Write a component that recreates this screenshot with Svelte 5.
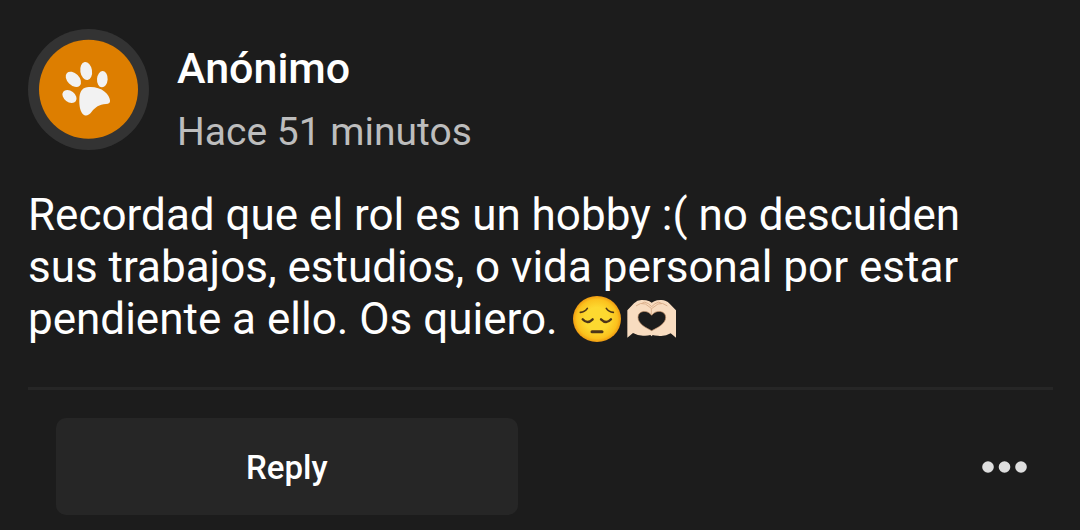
<script>
    const post = {
        author: "Anónimo",
        time: "Hace 51 minutos",
        text: "Recordad que el rol es un hobby :( no descuiden sus trabajos, estudios, o vida personal por estar pendiente a ello. Os quiero."
    };
</script>

<article class="post">
    <header>
        <svg class="avatar" viewBox="24 27 363 363" aria-hidden="true">
            <circle cx="205.5" cy="208.5" r="181.5" fill="#333333" />
            <circle cx="205.5" cy="208" r="148.5" fill="#dd7e00" />
            <g fill="#f2f2f2">
                <ellipse cx="198.500" cy="153" rx="17.500" ry="27.500" transform="rotate(-9 198.500 153)" />
                <ellipse cx="160" cy="178" rx="18" ry="27" transform="rotate(-45 160 178)" />
                <ellipse cx="148.500" cy="229.500" rx="16.500" ry="23.500" transform="rotate(-53 148.500 229.500)" />
                <ellipse cx="247" cy="177.500" rx="16" ry="24.500" transform="rotate(4 247 177.500)" />
                <path d="M201 202C218 199 240 203 254 215C264 223 269 232 270 241C271 249 267 252 258 252C237 253 226 262 215 275C207 285 200 289 192 285C181 279 177 257 178 238C179 217 184 205 201 202Z" />
            </g>
        </svg>
        <div class="info">
            <h2>{post.author}</h2>
            <time>{post.time}</time>
        </div>
    </header>

    <p class="text">
        {post.text}
        <span class="emojis">
            <svg viewBox="30 24 156 156" role="img" aria-label="😔">
                <defs>
                    <radialGradient id="face">
                        <stop offset="0.5" stop-color="#fdd930" />
                        <stop offset="0.85" stop-color="#fbc11d" />
                        <stop offset="1" stop-color="#ef9b12" />
                    </radialGradient>
                </defs>
                <ellipse cx="108" cy="102" rx="72" ry="69" fill="url(#face)" />
                <g fill="none" stroke="#4d3518" stroke-width="7" stroke-linecap="round">
                    <path d="M58 82Q72 81 79 70" stroke-width="5" />
                    <path d="M157 82Q143 81 136 70" stroke-width="5" />
                    <path d="M65 103Q79 119 95 103" />
                    <path d="M120 103Q136 119 150 103" />
                    <path d="M93 140H123" stroke-width="9" />
                </g>
            </svg>
            <svg viewBox="192 24 156 156" role="img" aria-label="🫶🏻">
                <path
                    fill="#f8dcc0"
                    fill-rule="evenodd"
                    d="M199 158V76L219 55Q230 44 243 45Q257 45 265 49L272 53L280 49Q289 44 302 45Q315 45 326 56L345 76V158L329 145Q312 155 291 152Q280 152 275 150L272 154L268 150Q259 153 246 152Q230 152 216 144ZM272 137C256 129 231 117 231 97C231 76 260 73 272 91C284 73 314 76 314 97C314 117 288 129 272 137Z"
                />
                <path
                    d="M272 137C256 129 231 117 231 97C231 76 260 73 272 91C284 73 314 76 314 97C314 117 288 129 272 137Z"
                    fill="none"
                    stroke="#b98a63"
                    stroke-width="2"
                />
                <g fill="none" stroke="#dbb08c" stroke-width="3" stroke-linecap="round">
                    <path d="M226 62Q239 51 253 57L271 70V88" />
                    <path d="M318 62Q305 51 291 57L273 70" />
                    <path d="M242 55Q251 47 262 56L272 65L282 56Q293 47 302 55" />
                </g>
            </svg>
        </span>
    </p>

    <footer>
        <button class="reply" type="button">Reply</button>
        <button class="more" type="button" aria-label="Más opciones">
            <svg viewBox="0 0 46 12" aria-hidden="true">
                <circle cx="6" cy="6" r="5.800" />
                <circle cx="22.500" cy="6" r="5.800" />
                <circle cx="39" cy="6" r="5.800" />
            </svg>
        </button>
    </footer>
</article>

<style>
  :global(body) {
    background: #1c1c1c;
  }

  .post {
    padding: 29px 27px 15px 28px;
    font-family: Roboto, sans-serif;
    color: #fff;
  }

  header {
    display: flex;
    align-items: flex-start;
    gap: 28px;
  }

  .avatar {
    width: 121px;
    height: 121px;
    flex-shrink: 0;
  }

  .info {
    display: flex;
    flex-direction: column;
    gap: 12px;
    padding-top: 13px;
    line-height: 52px;
  }

  h2 {
    margin: 0;
    font-size: 43px;
    font-weight: 500;
  }

  time {
    font-size: 39px;
    color: #bdbdbd;
  }

  .text {
    margin: 31px 0 42px;
    padding-right: 28px;
    font-size: 44px;
    line-height: 52px;
  }

  .emojis {
    display: inline-flex;
    gap: 2px;
    padding-left: 2px;
    vertical-align: top;
  }

  .emojis svg {
    width: 52px;
    height: 52px;
  }

  footer {
    display: flex;
    align-items: center;
    justify-content: space-between;
    padding: 28px 25px 0 28px;
    border-top: 3px solid #262626;
  }

  button {
    border: 0;
    color: inherit;
    font-family: inherit;
    cursor: pointer;
  }

  .reply {
    width: 47.5%;
    padding: 29px 28px 27px;
    border-radius: 10px;
    background: #262626;
    font-size: 33px;
    font-weight: 500;
    line-height: 41px;
  }

  .more {
    padding: 0;
    background: none;
  }

  .more svg {
    display: block;
    width: 46px;
    height: 12px;
    fill: #dedede;
  }
</style>
